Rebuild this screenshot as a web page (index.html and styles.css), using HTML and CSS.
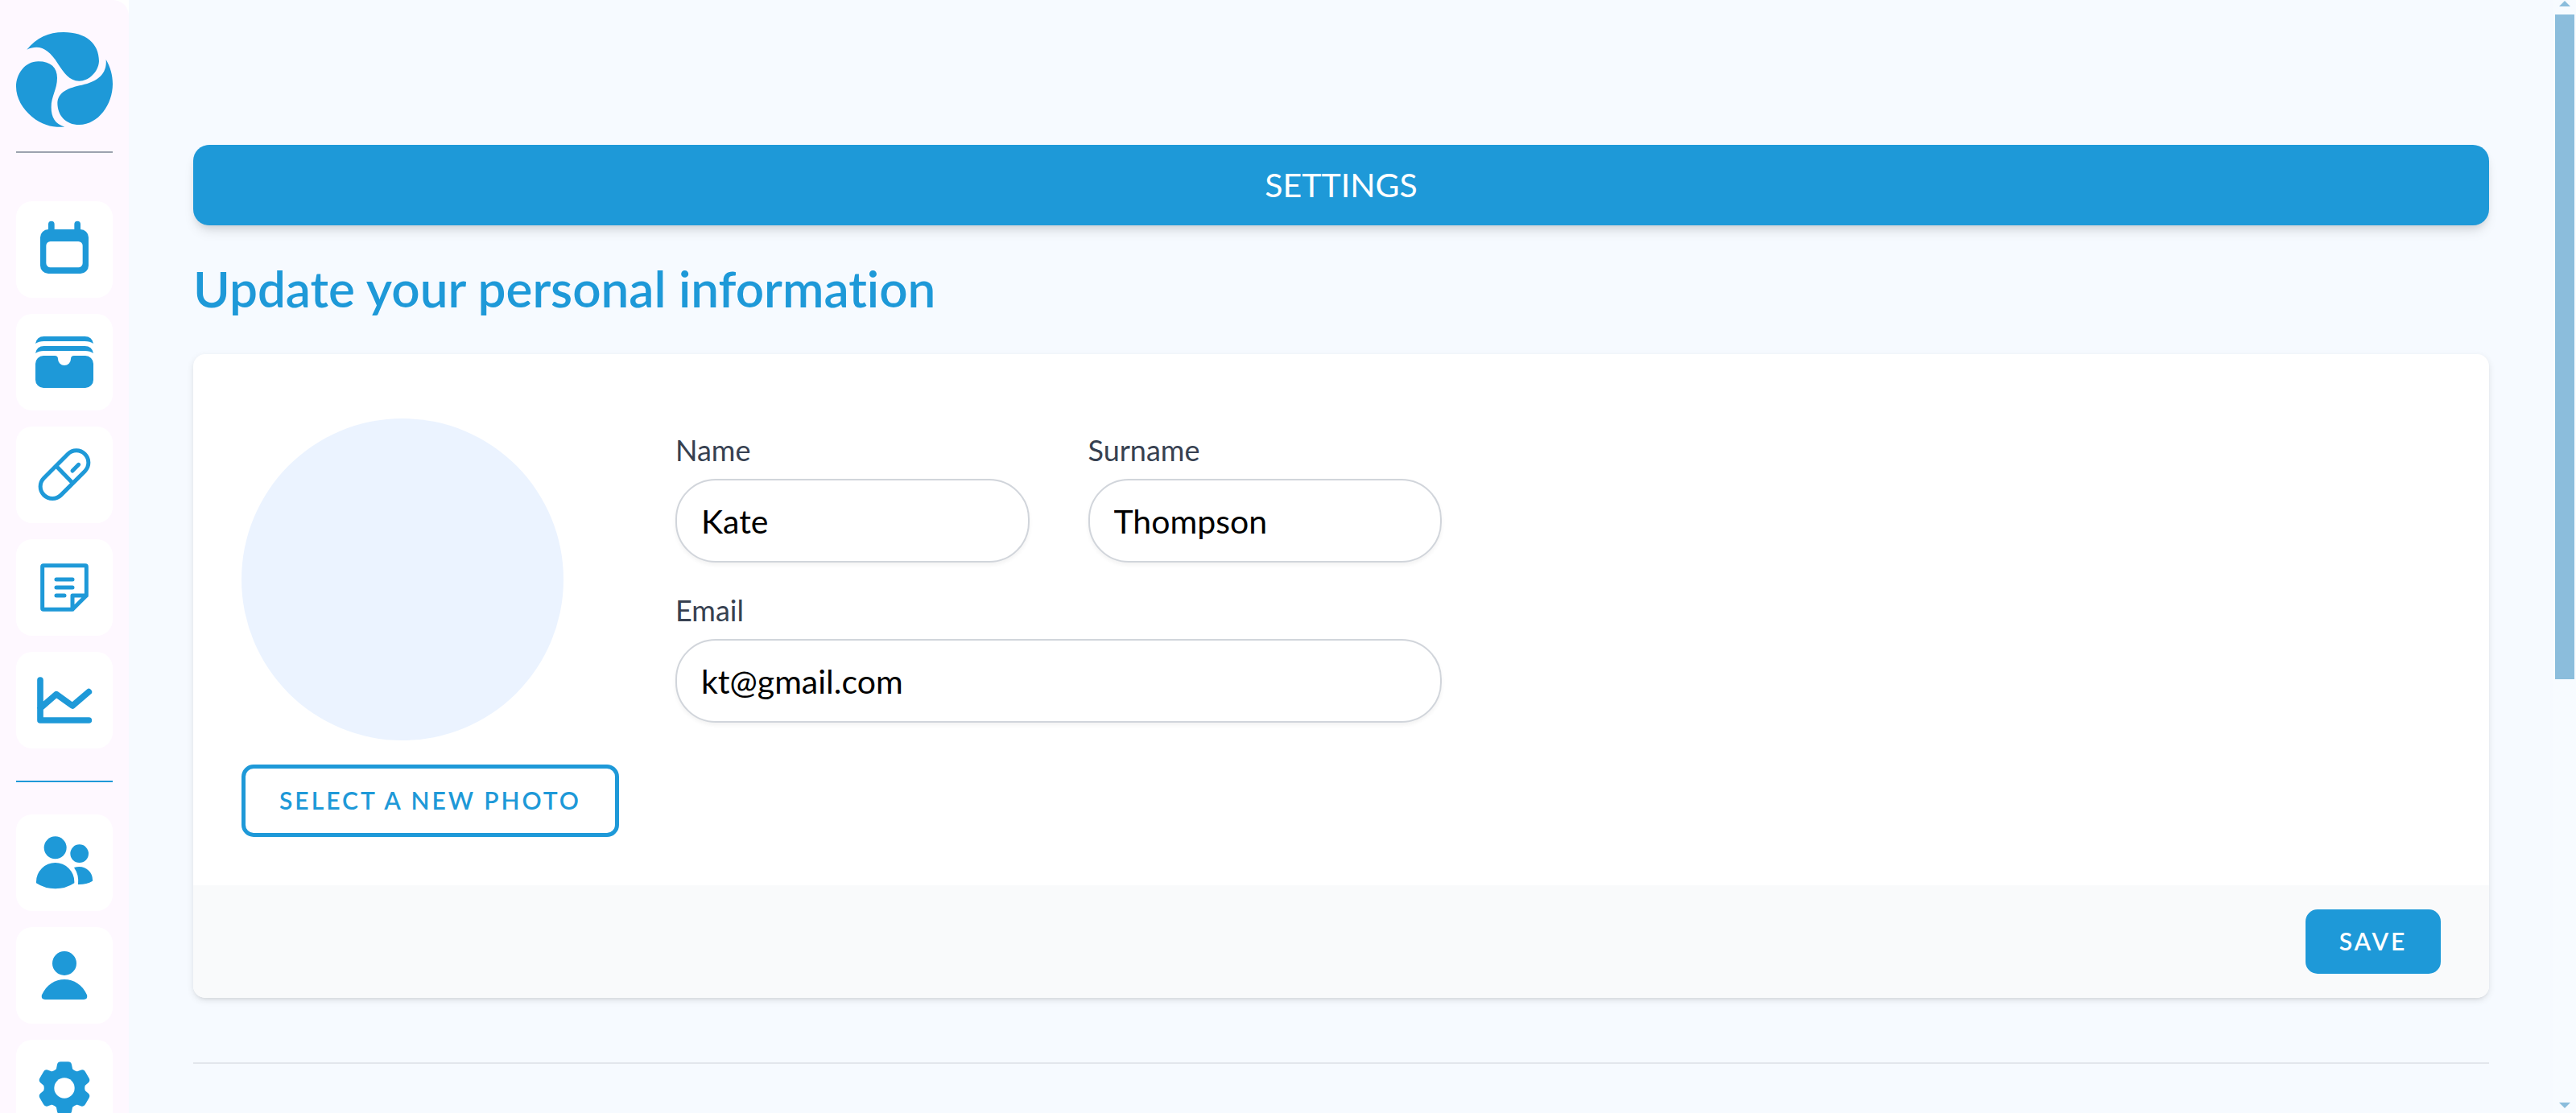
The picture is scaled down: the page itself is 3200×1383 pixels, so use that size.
FILE: index.html
```html
<!DOCTYPE html>
<html lang="en">
<head>
<meta charset="utf-8">
<meta name="viewport" content="width=device-width, initial-scale=1">
<title>Settings</title>
<link rel="stylesheet" href="styles.css">
</head>
<body>
<div class="shell">
  <aside class="sidebar">
    <a class="logo" href="#" aria-label="Home">
      <svg viewBox="60 120 360 354" aria-hidden="true">
        <path d="M100 185C137 141 180 120 237 120C320 120 369 162 369 228C367 268 331 302 295 302C258 301 238 271 215 236C182 184 148 163 100 185Z"/>
        <path d="M395 222C411 249 420 280 420 313C420 390 366 465 296 465C244 465 214 429 214 383C215 344 256 326 305 317C361 305 400 277 395 222Z"/>
        <path d="M241 473C202 476 158 468 118 434C85 406 60 366 60 323C60 277 92 229 143 229C190 229 213 253 213 290C213 334 191 357 191 400C191 437 205 463 241 473Z"/>
      </svg>
    </a>
    <hr class="rule rule-top">
    <nav class="nav" aria-label="Records">
      <a class="tile" href="#" aria-label="Calendar">
        <svg viewBox="0 0 360 360"><path fill-rule="evenodd" d="M120 105V86a11 11 0 0 1 23 0v19h74V86a11 11 0 0 1 23 0v19a30 30 0 0 1 30 30v105a30 30 0 0 1-30 30H120a30 30 0 0 1-30-30V135a30 30 0 0 1 30-30ZM128 150a16 16 0 0 0-16 16v65a16 16 0 0 0 16 16h104a16 16 0 0 0 16-16v-65a16 16 0 0 0-16-16Z"/></svg>
      </a>
      <a class="tile" href="#" aria-label="Documents">
        <svg viewBox="0 0 360 360"><path d="M72 111Q77 84 104 84H256Q283 84 288 111Q276 102 256 102H104Q84 102 72 111ZM72 147Q77 120 104 120H256Q283 120 288 147Q276 138 256 138H104Q84 138 72 147ZM102 156H144Q156 156 156 168A24 24 0 0 0 204 168Q204 156 216 156H258A30 30 0 0 1 288 186V246A30 30 0 0 1 258 276H102A30 30 0 0 1 72 246V186A30 30 0 0 1 102 156Z"/></svg>
      </a>
      <a class="tile" href="#" aria-label="Medication">
        <svg class="line" viewBox="0 0 360 360"><rect x="72" y="134" width="216" height="90" rx="45" transform="rotate(-45 180 179)"/><path d="M152 150L208 208M210 165L233 142"/></svg>
      </a>
      <a class="tile" href="#" aria-label="Notes">
        <svg class="line" viewBox="0 0 360 360"><path d="M262 210V102a4 4 0 0 0-4-4H102a4 4 0 0 0-4 4V258a4 4 0 0 0 4 4H210ZM210 262V210H262M150 150H210M150 180H210M150 210H180"/></svg>
      </a>
      <a class="tile" href="#" aria-label="Statistics">
        <svg class="line line-bold" viewBox="0 0 360 360"><path d="M90 105V255H271M90 210L150 158L210 201L271 149"/></svg>
      </a>
    </nav>
    <hr class="rule rule-accent">
    <nav class="nav" aria-label="Account">
      <a class="tile" href="#" aria-label="People">
        <svg viewBox="0 0 360 360"><circle cx="146" cy="124" r="42"/><circle cx="236" cy="146" r="34"/><path d="M75 251A71 71 0 0 1 217 251V256Q185 277 146 277T75 256ZM216 198C252 186 285 210 285 243V248Q261 262 231 261Q235 225 216 198Z"/></svg>
      </a>
      <a class="tile" href="#" aria-label="Profile">
        <svg viewBox="0 0 360 360"><circle cx="180" cy="135" r="45"/><path d="M96 253C112 216 145 195 180 195S248 216 264 253Q268 270 252 270H108Q92 270 96 253Z"/></svg>
      </a>
      <a class="tile" href="#" aria-label="Settings">
        <svg viewBox="-180 -180 360 360">
          <defs><path id="tooth" d="M0 0L-45 -62Q-31 -67 -30 -73L-27 -88Q-24 -98 -14 -98H14Q24 -98 27 -88L30 -73Q31 -67 45 -62Z"/></defs>
          <circle r="73"/>
          <use href="#tooth"/><use href="#tooth" transform="rotate(60)"/><use href="#tooth" transform="rotate(120)"/><use href="#tooth" transform="rotate(180)"/><use href="#tooth" transform="rotate(240)"/><use href="#tooth" transform="rotate(300)"/>
          <circle class="hole" r="38"/>
        </svg>
      </a>
    </nav>
  </aside>

  <main class="content">
    <h1 class="banner">SETTINGS</h1>
    <h2 class="title">Update your personal information</h2>
    <form class="card">
      <div class="card-body">
        <div class="photo">
          <div class="avatar"></div>
          <button class="button button-outline" type="button">SELECT A NEW PHOTO</button>
        </div>
        <div class="fields">
          <div class="field">
            <label for="name">Name</label>
            <input id="name" type="text" value="Kate">
          </div>
          <div class="field">
            <label for="surname">Surname</label>
            <input id="surname" type="text" value="Thompson">
          </div>
          <div class="field field-wide">
            <label for="email">Email</label>
            <input id="email" type="email" value="kt@gmail.com">
          </div>
        </div>
      </div>
      <div class="card-footer">
        <button class="button button-solid" type="submit">SAVE</button>
      </div>
    </form>
    <hr class="divider">
  </main>

  <div class="scrollbar" aria-hidden="true">
    <svg class="arrow" viewBox="0 0 14 7"><path d="M0 7L7 0L14 7Z"/></svg>
    <div class="track"><div class="thumb"></div></div>
    <svg class="arrow" viewBox="0 0 14 7"><path d="M0 0H14L7 7Z"/></svg>
  </div>
</div>
</body>
</html>
```
FILE: styles.css
```css
:root {
  --blue: #1e99d8;
  --font: "Lato", "Liberation Sans", sans-serif;
}

* {
  box-sizing: border-box;
}

body {
  margin: 0;
  background: #fff;
  font-family: var(--font);
  font-variant-ligatures: none;
}

.shell {
  display: grid;
  grid-template-columns: 160px 1fr 28px;
  height: 100vh;
  overflow: hidden;
}

/* Sidebar */
.sidebar {
  padding: 40px 20px 0;
  background: #fef8ff;
  border-top-right-radius: 20px;
  overflow: hidden;
}

.logo {
  display: block;
  height: 118px;
}

.logo svg,
.tile svg {
  display: block;
  width: 100%;
  height: 100%;
  fill: var(--blue);
}

.rule {
  height: 2px;
  margin: 0;
  border: 0;
}

.rule-top {
  margin: 30px 0 60px;
  background: #9ca3af;
}

.rule-accent {
  margin: 40px 0;
  background: var(--blue);
}

.nav {
  display: flex;
  flex-direction: column;
  gap: 20px;
}

.tile {
  display: block;
  height: 120px;
  flex: none;
  background: #fff;
  border-radius: 20px;
}

.tile svg.line {
  fill: none;
  stroke: var(--blue);
  stroke-width: 15px;
  stroke-linecap: round;
  stroke-linejoin: round;
}

.tile svg.line-bold {
  stroke-width: 23px;
}

.hole {
  fill: #fff;
}

/* Main content */
.content {
  padding: 180px 80px 0;
  background: #f6faff;
  overflow: hidden;
}

.banner {
  margin: 0;
  padding: 20px;
  border-radius: 20px;
  background: var(--blue);
  box-shadow: 0 10px 15px -3px rgba(0, 0, 0, 0.1), 0 5px 10px -3px rgba(0, 0, 0, 0.1);
  color: #fff;
  font-size: 41px;
  font-weight: 400;
  line-height: 60px;
  text-align: center;
}

.title {
  margin: 38px 0 42px;
  color: var(--blue);
  font-size: 62px;
  font-weight: 600;
  line-height: 80px;
}

.card {
  border-radius: 15px;
  background: #fff;
  box-shadow: 0 3px 8px rgba(0, 0, 0, 0.1), 0 3px 5px -3px rgba(0, 0, 0, 0.1);
  overflow: hidden;
}

.card-body {
  display: flex;
  align-items: flex-start;
  gap: 70px;
  padding: 80px 60px 60px;
}

.photo {
  display: flex;
  flex-direction: column;
  align-items: flex-start;
  gap: 30px;
}

.avatar {
  width: 400px;
  height: 400px;
  border-radius: 50%;
  background: #ebf3ff;
}

.button {
  border: 0;
  border-radius: 15px;
  font-family: var(--font);
  font-size: 30px;
  font-weight: 600;
  letter-spacing: 3px;
  line-height: 40px;
}

.button-outline {
  width: 469px;
  padding: 19px 0 21px;
  border: 5px solid var(--blue);
  background: #fff;
  color: var(--blue);
}

.button-solid {
  width: 168px;
  padding: 19px 0 21px;
  background: var(--blue);
  color: #fff;
}

.fields {
  display: grid;
  grid-template-columns: 1fr 1fr;
  gap: 34px 73px;
  flex: 0 1 952px;
  padding-top: 14px;
}

.field {
  display: flex;
  flex-direction: column;
  gap: 11px;
  min-width: 0;
}

.field-wide {
  grid-column: 1 / -1;
}

.field label {
  color: #374151;
  font-size: 36px;
  line-height: 50px;
}

.field input {
  width: 100%;
  height: 104px;
  padding: 0 30px;
  border: 2px solid #d1d5db;
  border-radius: 50px;
  background: #fff;
  box-shadow: 0 3px 5px rgba(0, 0, 0, 0.05);
  color: #000;
  font-family: var(--font);
  font-size: 41px;
}

.card-footer {
  display: flex;
  justify-content: flex-end;
  padding: 30px 60px;
  background: #f9fafb;
}

.divider {
  height: 2px;
  margin: 80px 0;
  border: 0;
  background: #e2e6ec;
}

/* Scrollbar */
.scrollbar {
  display: flex;
  flex-direction: column;
  align-items: center;
  gap: 10px;
  padding: 1px 2px 6px;
  background: #f7fbff;
}

.arrow {
  width: 14px;
  height: 7px;
  fill: #8bbddc;
}

.track {
  display: grid;
  grid-template-rows: 8fr 5fr;
  flex: 1;
  align-self: stretch;
}

.thumb {
  background: #8bbddc;
}
```
